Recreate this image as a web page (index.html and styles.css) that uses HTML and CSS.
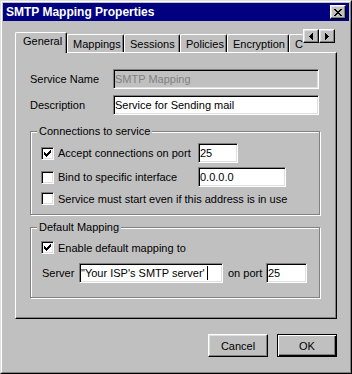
FILE: index.html
```html
<!DOCTYPE html>
<html>
<head>
  <meta charset="utf-8">
  <link rel="stylesheet" href="styles.css">
</head>
<body>
  <div class="window">
    <div class="frame">
      <div class="titlebar">
        <span class="title">SMTP Mapping Properties</span>
        <span class="caption-btn">
          <svg width="8" height="7" viewBox="0 0 8 7" shape-rendering="crispEdges"><path d="M0 0h2v1H0z M6 0h2v1H6z M1 1h2v1H1z M5 1h2v1H5z M2 2h4v1H2z M3 3h2v1H3z M2 4h4v1H2z M1 5h2v1H1z M5 5h2v1H5z M0 6h2v1H0z M6 6h2v1H6z" fill="#000"/></svg>
        </span>
      </div>

      <div class="body">
        <div class="tabstrip">
          <div class="tab active w-general">General</div>
          <div class="tab w-mappings">Mappings</div>
          <div class="tab w-sessions">Sessions</div>
          <div class="tab w-policies">Policies</div>
          <div class="tab w-encryption">Encryption</div>
          <div class="tab tab-cut">C</div>

          <!-- tab scroll buttons sit over the last tab -->
          <div class="scroller">
            <span class="arrow-btn">
              <svg width="4" height="7" viewBox="0 0 4 7" shape-rendering="crispEdges"><path d="M0 3h1v1H0z M1 2h1v3H1z M2 1h1v5H2z M3 0h1v7H3z" fill="#000"/></svg>
            </span>
            <span class="arrow-btn">
              <svg width="4" height="7" viewBox="0 0 4 7" shape-rendering="crispEdges"><path d="M0 0h1v7H0z M1 1h1v5H1z M2 2h1v3H2z M3 3h1v1H3z" fill="#000"/></svg>
            </span>
          </div>
        </div>

        <div class="panel">
          <div class="field-row">
            <span class="field-label">Service Name</span>
            <div class="edit disabled w-name">SMTP Mapping</div>
          </div>
          <div class="field-row">
            <span class="field-label">Description</span>
            <div class="edit w-name">Service for Sending mail</div>
          </div>

          <div class="group group-conn">
            <span class="legend">Connections to service</span>
            <div class="check-row tall">
              <span class="check checked"></span>
              <span class="check-label fixed">Accept connections on port</span>
              <div class="edit w-port">25</div>
            </div>
            <div class="check-row tall second">
              <span class="check"></span>
              <span class="check-label fixed">Bind to specific interface</span>
              <div class="edit w-ip">0.0.0.0</div>
            </div>
            <div class="check-row third">
              <span class="check"></span>
              <span class="check-label">Service must start even if this address is in use</span>
            </div>
          </div>

          <div class="group group-map">
            <span class="legend">Default Mapping</span>
            <div class="check-row">
              <span class="check checked"></span>
              <span class="check-label">Enable default mapping to</span>
            </div>
            <div class="server-row">
              <span class="server-label">Server</span>
              <div class="edit w-server">"Your ISP's SMTP server'<span class="caret"></span></div>
              <span class="port-label">on port</span>
              <div class="edit w-port2">25</div>
            </div>
          </div>
        </div>

        <div class="buttons">
          <div class="btn">Cancel</div>
          <div class="btn btn-default">OK</div>
        </div>
      </div>
    </div>
  </div>
</body>
</html>
```

FILE: styles.css
```css
body {
  margin: 0;
  font-family: "Liberation Sans", Arial, sans-serif;
  font-size: 11px;
  color: #000;
  background: #c0c0c0;
}

/* window frame */
.window {
  width: 352px;
  height: 374px;
  box-sizing: border-box;
  border: 1px solid;
  border-color: #dfdfdf #000 #000 #dfdfdf;
  background: #c0c0c0;
}

.frame {
  height: 100%;
  box-sizing: border-box;
  border: 1px solid;
  border-color: #fff #808080 #808080 #fff;
  padding: 1px;
}

.titlebar {
  height: 18px;
  background: #000080;
  display: flex;
  align-items: center;
  justify-content: space-between;
  padding: 0 3px;
}

.title {
  color: #fff;
  font-weight: bold;
  font-size: 12px;
}

.caption-btn {
  width: 16px;
  height: 14px;
  box-sizing: border-box;
  background: #c0c0c0;
  border: 1px solid;
  border-color: #fff #000 #000 #fff;
  box-shadow: inset -1px -1px #808080, inset 1px 1px #dfdfdf;
  display: flex;
  align-items: center;
  justify-content: center;
}

.caption-btn svg {
  display: block;
}

.body {
  padding: 8px 12px 0 12px;
}

/* tabs */
.tabstrip {
  position: relative;
  height: 23px;
  display: flex;
  align-items: flex-end;
  padding-left: 2px;
}

.tab {
  height: 18px;
  box-sizing: border-box;
  border: 1px solid #fff;
  border-bottom: none;
  border-right-color: #000;
  box-shadow: inset -1px 0 #808080;
  border-radius: 2px 2px 0 0;
  padding: 3px 0 0 5px;
  line-height: 13px;
  white-space: nowrap;
  flex-shrink: 0;
}

.tab.active {
  position: relative;
  z-index: 1;
  height: 21px;
  margin-left: -2px;
  margin-bottom: -1px;
  padding: 2px 0 0 7px;
  background: #c0c0c0;
}

.w-general { width: 50px; }
.tab.active.w-general { width: 52px; }
.w-mappings { width: 57px; }
.w-sessions { width: 56px; }
.w-policies { width: 47px; }
.w-encryption { width: 62px; }

.tab-cut {
  width: 14px;
  border-right: none;
  box-shadow: none;
}

.scroller {
  position: absolute;
  top: 0;
  left: 288px;
  display: flex;
  z-index: 2;
}

.arrow-btn {
  width: 16px;
  height: 14px;
  box-sizing: border-box;
  background: #c0c0c0;
  border: 1px solid;
  border-color: #fff #000 #000 #fff;
  box-shadow: inset -1px -1px #808080, inset 1px 1px #dfdfdf;
  display: flex;
  align-items: center;
  justify-content: center;
}

.arrow-btn svg {
  display: block;
}

/* tab page */
.panel {
  height: 267px;
  box-sizing: border-box;
  border: 1px solid;
  border-color: #fff #000 #000 #fff;
  box-shadow: inset -1px -1px #808080;
  padding: 16px 0 0 14px;
}

.field-row {
  display: flex;
  align-items: center;
  height: 20px;
  margin-bottom: 6px;
}

.field-label {
  width: 83px;
}

.edit {
  box-sizing: border-box;
  height: 20px;
  border: 1px solid;
  border-color: #808080 #fff #fff #808080;
  box-shadow: inset 1px 1px #000, inset -1px -1px #dfdfdf;
  background: #fff;
  padding: 0 1px;
  line-height: 18px;
  white-space: nowrap;
  overflow: hidden;
}

.edit.disabled {
  background: #c0c0c0;
  color: #808080;
}

.w-name { width: 206px; }
.w-port { width: 40px; }
.w-ip { width: 88px; }
.w-server { width: 144px; }
.w-port2 { width: 41px; }

.caret {
  display: inline-block;
  width: 1px;
  height: 14px;
  margin-left: 2px;
  background: #000;
  vertical-align: -3px;
}

/* group boxes */
.group {
  position: relative;
  box-sizing: border-box;
  width: 290px;
  border: 1px solid #808080;
  box-shadow: inset 1px 1px #fff, 1px 1px #fff;
}

.legend {
  position: absolute;
  top: -7px;
  left: 6px;
  padding: 0 2px;
  background: #c0c0c0;
  line-height: 13px;
}

.group-conn {
  margin-top: 16px;
  height: 84px;
  padding: 11px 0 0 10px;
}

.group-map {
  margin-top: 12px;
  height: 71px;
  padding: 13px 0 0 10px;
}

.check-row {
  display: flex;
  align-items: center;
  height: 13px;
}

.check-row.tall {
  height: 20px;
}

.check-row.second {
  margin-top: 4px;
}

.check-row.third {
  margin-top: 5px;
}

.check {
  width: 13px;
  height: 13px;
  box-sizing: border-box;
  border: 1px solid;
  border-color: #808080 #fff #fff #808080;
  box-shadow: inset 1px 1px #000, inset -1px -1px #dfdfdf;
  background: #fff;
  margin-right: 4px;
  flex-shrink: 0;
  display: flex;
  align-items: center;
  justify-content: center;
}

.check.checked::after {
  content: "";
  width: 7px;
  height: 7px;
  background: url("data:image/svg+xml,%3Csvg xmlns='http://www.w3.org/2000/svg' width='7' height='7' shape-rendering='crispEdges'%3E%3Cpath d='M0 2h1v3H0z M1 3h1v3H1z M2 4h1v3H2z M3 3h1v3H3z M4 2h1v3H4z M5 1h1v3H5z M6 0h1v3H6z' fill='%23000'/%3E%3C/svg%3E") no-repeat;
}

.check-label {
  white-space: nowrap;
}

.check-label.fixed {
  width: 140px;
}

.server-row {
  display: flex;
  align-items: center;
  height: 20px;
  margin-top: 9px;
  margin-left: 1px;
}

.server-label {
  width: 37px;
}

.port-label {
  width: 38px;
  margin-left: 5px;
}

/* dialog buttons */
.buttons {
  display: flex;
  justify-content: flex-end;
  gap: 9px;
  margin-top: 15px;
}

.btn {
  width: 60px;
  height: 23px;
  box-sizing: border-box;
  border: 1px solid;
  border-color: #fff #000 #000 #fff;
  box-shadow: inset -1px -1px #808080, inset 1px 1px #dfdfdf;
  display: flex;
  align-items: center;
  justify-content: center;
}

.btn-default {
  border-color: #000;
  box-shadow: inset 1px 1px #fff, inset -1px -1px #000, inset -2px -2px #808080;
}
```
